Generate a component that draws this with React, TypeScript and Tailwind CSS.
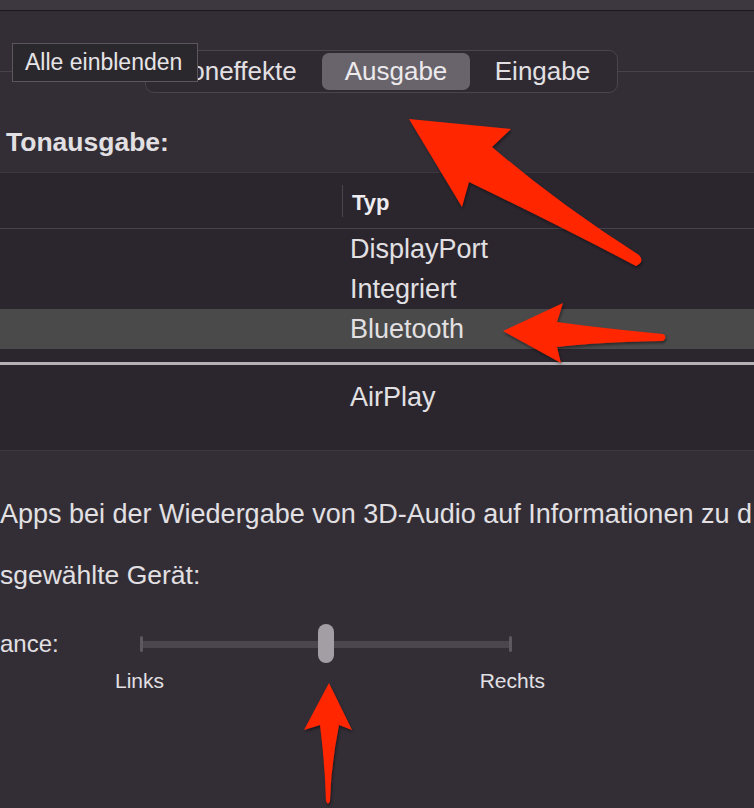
import React from 'react'

const rows = ['DisplayPort', 'Integriert', 'Bluetooth']

function Arrows() {
  return (
    <svg
      className="absolute inset-0 pointer-events-none"
      width={754}
      height={808}
      viewBox="0 0 754 808"
    >
      <defs>
        <filter id="sh" x="-10%" y="-10%" width="130%" height="130%">
          <feDropShadow dx="1" dy="2" stdDeviation="1.5" floodColor="#000" floodOpacity="0.45" />
        </filter>
      </defs>
      <g fill="#ff2600" filter="url(#sh)">
        {/* Pfeil auf Ausgabe */}
        <path d="M409,119 L511,129 L492,147 Q560,205 639,255 Q645,262 636,266 Q560,226 469,182 L462,207 Z" />
        {/* Pfeil auf Bluetooth */}
        <path d="M503,331 L563,303 L557,322 Q600,328 663,334 Q668,337 663,341 Q600,342 557,347 L561,363 Z" />
        {/* Pfeil auf Balance-Regler */}
        <path d="M329,683 L352,730 L339,725 Q331,765 330,801 Q328,806 326,801 Q325,765 320,725 L304,730 Z" />
      </g>
    </svg>
  )
}

export default function App() {
  return (
    <div
      className="relative w-[754px] h-[808px] overflow-hidden bg-[#332e36] text-[#e2e0e3]"
      style={{ fontFamily: '"Liberation Sans", Arial, sans-serif' }}
    >
      {/* Titelleiste */}
      <div className="h-[11px] bg-[#3d383f] border-b border-[#1b181c]" />

      {/* Tabs */}
      <div className="mt-[39px] flex items-center">
        <div className="w-[145px] h-px bg-[#48434b]" />
        <div className="w-[473px] h-[43px] flex p-[2px] rounded-[9px] border border-[#4a454d] bg-[#2f2a32] text-[26px]">
          <div className="w-[174px] flex items-center justify-center pl-[4px]">Toneffekte</div>
          <div className="w-[148px] flex items-center justify-center rounded-[7px] bg-[#69646b] text-[#eceaed]">
            Ausgabe
          </div>
          <div className="flex-1 flex items-center justify-center">Eingabe</div>
        </div>
        <div className="flex-1 h-px bg-[#48434b]" />
      </div>

      {/* Tooltip */}
      <div className="absolute left-[12px] top-[43px] w-[186px] h-[39px] flex items-center pl-[12px] bg-[#2b282d] border border-[#5a565c] text-[23px] text-[#e6e4e7]">
        Alle einblenden
      </div>

      <div className="mt-[34px] pl-[6px] text-[26.5px] leading-[30px] font-bold">Tonausgabe:</div>

      {/* Geräteliste */}
      <div className="mt-[15px] h-[279px] bg-[#2b262e] border-t border-b border-[#3c373f]">
        <div className="h-[56px] flex items-center border-b border-[#46414a]">
          <div className="ml-[342px] w-px h-[32px] bg-[#4a454d]" />
          <div className="pl-[9px] pt-[3px] text-[22px] font-bold text-[#eeecef]">Typ</div>
        </div>
        {rows.map((r) => (
          <div
            key={r}
            className={`h-[40px] flex items-center pl-[350px] text-[27px] ${
              r === 'Bluetooth' ? 'bg-[#4a4a4a]' : ''
            }`}
          >
            {r}
          </div>
        ))}
        <div className="mt-[13px] h-[3px] bg-[#b3b1b4]" />
        <div className="mt-[12px] h-[40px] flex items-center pl-[350px] text-[27px]">AirPlay</div>
      </div>

      <div className="mt-[48px] text-[27px] leading-[30px] whitespace-nowrap">
        Apps bei der Wiedergabe von 3D-Audio auf Informationen zu d
      </div>

      <div className="mt-[31px] text-[26.5px] leading-[30px] whitespace-nowrap">sgewählte Gerät:</div>

      {/* Balance */}
      <div className="mt-[34px] h-[40px] flex items-center">
        <div className="w-[140px] text-[24px]">ance:</div>
        <div className="relative w-[372px] h-[40px] flex items-center">
          <div className="w-[3px] h-[16px] rounded-full bg-[#5d585f]" />
          <div className="flex-1 h-[7px] bg-[#4b464e]" />
          <div className="w-[3px] h-[16px] rounded-full bg-[#5d585f]" />
          <div className="absolute left-[178px] top-0 w-[16px] h-[39px] rounded-full bg-[#a29ea3]" />
        </div>
      </div>
      <div className="mt-[5px] ml-[115px] w-[430px] flex justify-between text-[21px] leading-[24px]">
        <span>Links</span>
        <span>Rechts</span>
      </div>

      <Arrows />
    </div>
  )
}
